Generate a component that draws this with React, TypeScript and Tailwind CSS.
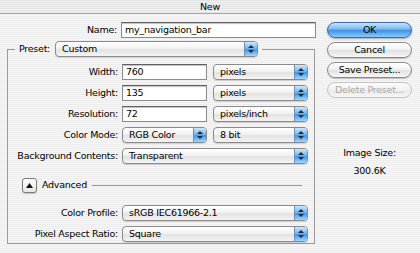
import React from "react";

const stripes =
  "bg-[repeating-linear-gradient(to_bottom,#ededed_0px,#ededed_1px,#f6f6f6_1px,#f6f6f6_2px)]";

const Field = ({ value, width }: { value: string; width: string }) => (
  <div
    className={`${width} h-[16px] bg-white border border-[#8c8c8c] border-t-[#5f5f5f] shadow-[inset_0_1px_1px_rgba(0,0,0,0.25)] flex items-center pl-[3px] text-black leading-none`}
  >
    {value}
  </div>
);

const Popup = ({ value, width }: { value: string; width: string }) => (
  <div
    className={`${width} h-[16px] rounded-[4px] border border-[#8a8a8a] bg-[linear-gradient(to_bottom,#ffffff,#f2f2f2_45%,#e2e2e2_55%,#f4f4f4)] shadow-[0_1px_1px_rgba(0,0,0,0.15)] flex items-stretch leading-none`}
  >
    <div className="flex-1 flex items-center pl-[6px] text-black overflow-hidden whitespace-nowrap">
      {value}
    </div>
    <div className="w-[13px] rounded-r-[3px] border-l border-[#6d8fbb] bg-[linear-gradient(to_bottom,#cfe7fb,#76b6ee_45%,#3f95e6_55%,#a3d6fb)] flex flex-col items-center justify-center gap-[2px]">
      <svg width="6" height="3" viewBox="0 0 6 3">
        <path d="M3 0 L6 3 L0 3 Z" fill="#1d2a3a" />
      </svg>
      <svg width="6" height="3" viewBox="0 0 6 3">
        <path d="M0 0 L6 0 L3 3 Z" fill="#1d2a3a" />
      </svg>
    </div>
  </div>
);

const Label = ({ children }: { children: React.ReactNode }) => (
  <div className="w-[110px] text-right text-black whitespace-nowrap">{children}</div>
);

const Row = ({ label, children }: { label: string; children: React.ReactNode }) => (
  <div className="flex items-center h-[16px]">
    <Label>{label}:</Label>
    <div className="ml-[4px] flex gap-[6px]">{children}</div>
  </div>
);

const AquaButton = ({
  label,
  primary,
  disabled,
}: {
  label: string;
  primary?: boolean;
  disabled?: boolean;
}) => (
  <div
    className={`w-[85px] h-[16px] rounded-full border flex items-center justify-center leading-none ${
      primary
        ? "border-[#3a6aa8] bg-[linear-gradient(to_bottom,#c9e4fb,#7fbdf2_40%,#3f93e4_55%,#8ccbfb)] text-black shadow-[0_1px_2px_rgba(0,0,0,0.3)]"
        : disabled
        ? "border-[#c4c4c4] bg-[linear-gradient(to_bottom,#fbfbfb,#f1f1f1_50%,#e9e9e9_55%,#f6f6f6)] text-[#a8a8a8]"
        : "border-[#8a8a8a] bg-[linear-gradient(to_bottom,#ffffff,#f3f3f3_45%,#e1e1e1_55%,#f7f7f7)] text-black shadow-[0_1px_1px_rgba(0,0,0,0.2)]"
    }`}
  >
    {label}
  </div>
);

export default function App() {
  return (
    <div
      className={`w-[420px] h-[253px] overflow-hidden flex flex-col text-[9.5px] tracking-[-0.25px] font-['DejaVu_Sans','Liberation_Sans',sans-serif] ${stripes}`}
    >
      <div className="h-[14px] shrink-0 flex items-center justify-center border-b border-[#a9a9a9] bg-[repeating-linear-gradient(to_bottom,#e4e4e4_0px,#e4e4e4_1px,#f1f1f1_1px,#f1f1f1_2px)] text-black leading-none">
        New
      </div>

      <div className="flex">
        <div className="w-[320px] flex flex-col">
          <div className="flex items-center h-[16px] mt-[8px]">
            <div className="w-[117px] text-right text-black">Name:</div>
            <div className="ml-[4px]">
              <Field value="my_navigation_bar" width="w-[195px]" />
            </div>
          </div>

          <fieldset className="ml-[7px] mt-[3px] w-[308px] h-[203px] border border-[#9b9b9b] p-0 min-w-0">
            <legend className="p-0 ml-[7px]">
              <div className="flex items-center h-[16px] px-[4px]">
                <span className="text-black mr-[5px]">Preset:</span>
                <Popup value="Custom" width="w-[203px]" />
              </div>
            </legend>

            <div className="flex flex-col gap-[5px] mt-[7px]">
              <Row label="Width">
                <Field value="760" width="w-[85px]" />
                <Popup value="pixels" width="w-[95px]" />
              </Row>
              <Row label="Height">
                <Field value="135" width="w-[85px]" />
                <Popup value="pixels" width="w-[95px]" />
              </Row>
              <Row label="Resolution">
                <Field value="72" width="w-[85px]" />
                <Popup value="pixels/inch" width="w-[95px]" />
              </Row>
              <Row label="Color Mode">
                <Popup value="RGB Color" width="w-[85px]" />
                <Popup value="8 bit" width="w-[95px]" />
              </Row>
              <Row label="Background Contents">
                <Popup value="Transparent" width="w-[186px]" />
              </Row>
            </div>

            <div className="flex items-center h-[15px] mt-[14px] ml-[14px] mr-[12px]">
              <div className="w-[15px] h-[15px] rounded-[3px] border border-[#7a7a7a] bg-[linear-gradient(to_bottom,#ffffff,#e6e6e6)] flex items-center justify-center shadow-[0_1px_1px_rgba(0,0,0,0.2)]">
                <svg width="7" height="5" viewBox="0 0 7 5">
                  <path d="M3.5 0 L7 5 L0 5 Z" fill="#111" />
                </svg>
              </div>
              <span className="ml-[5px] text-black">Advanced</span>
              <div className="flex-1 ml-[5px] h-px bg-[#9b9b9b]" />
            </div>

            <div className="flex flex-col gap-[5px] mt-[12px]">
              <Row label="Color Profile">
                <Popup value="sRGB IEC61966-2.1" width="w-[186px]" />
              </Row>
              <Row label="Pixel Aspect Ratio">
                <Popup value="Square" width="w-[186px]" />
              </Row>
            </div>
          </fieldset>
        </div>

        <div className="flex flex-col ml-[7px] mt-[8px]">
          <div className="flex flex-col gap-[4px]">
            <AquaButton label="OK" primary />
            <AquaButton label="Cancel" />
            <AquaButton label="Save Preset..." />
            <AquaButton label="Delete Preset..." disabled />
          </div>
          <div className="mt-[50px] text-center text-black leading-none">Image Size:</div>
          <div className="mt-[8px] text-center text-black leading-none">300.6K</div>
        </div>
      </div>
    </div>
  );
}
